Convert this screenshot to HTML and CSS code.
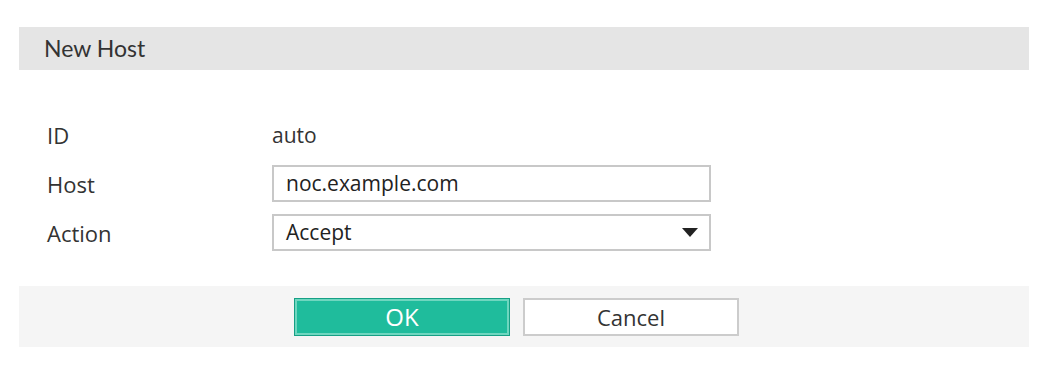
FILE: index.html
```html
<html>

<head>
    <meta http-equiv="Content-Type" content="text/html; charset=UTF-8">
    <link rel="stylesheet" href="styles.css">
</head>

<body>
    <div class="dialog">
        <header>New Host</header>

        <div class="form">
            <div class="row">
                <div class="label">ID</div>
                <div class="value">auto</div>
            </div>
            <div class="row">
                <div class="label">Host</div>
                <div class="field">noc.example.com</div>
            </div>
            <div class="row">
                <div class="label">Action</div>
                <div class="field select">
                    <span>Accept</span>
                    <svg class="caret" width="16" height="9" viewBox="0 0 16 9">
                        <path d="M0 0 H16 L8 9 Z" fill="#222"/>
                    </svg>
                </div>
            </div>
        </div>

        <footer>
            <button class="btn btn-ok">OK</button>
            <button class="btn btn-cancel">Cancel</button>
        </footer>
    </div>
</body>

</html>
```

FILE: styles.css
```css
body {
    margin: 0;
    background: white;
}

.dialog {
    padding: 27px 15px 0 19px;
    font-family: "Open Sans", "Noto Sans", sans-serif;
    color: #333333;
}

header {
    background: #e5e5e5;
    height: 43px;
    line-height: 43px;
    padding-left: 25px;
    font-family: Lato, sans-serif;
    font-size: 23px;
    color: #333333;
}

.form {
    padding: 46px 0 35px 28px;
}

.row {
    display: flex;
    align-items: center;
    height: 37px;
    margin-bottom: 12px;
}

.row:last-child {
    margin-bottom: 0;
}

.label {
    width: 225px;
    font-size: 22px;
}

.value {
    font-size: 21px;
}

.field {
    box-sizing: border-box;
    width: 439px;
    height: 37px;
    border: 2px solid #c8c8c8;
    padding: 0 12px;
    font-size: 21px;
    line-height: 33px;
    color: #222222;
}

.select {
    display: flex;
    justify-content: space-between;
    align-items: center;
}

.caret {
    margin-right: -1px;
}

footer {
    background: #f5f5f5;
    height: 61px;
    display: flex;
    align-items: center;
    padding-left: 275px;
    gap: 13px;
}

.btn {
    box-sizing: border-box;
    width: 216px;
    height: 38px;
    font-family: "Open Sans", "Noto Sans", sans-serif;
    font-size: 22px;
    cursor: pointer;
}

.btn-ok {
    background: #1fbc9c;
    color: white;
    font-size: 24px;
    border: 1px solid #16a085;
    box-shadow: inset 0 0 0 2px #6fd6bf;
}

.btn-cancel {
    background: white;
    color: #333333;
    border: 2px solid #cccccc;
}
```
